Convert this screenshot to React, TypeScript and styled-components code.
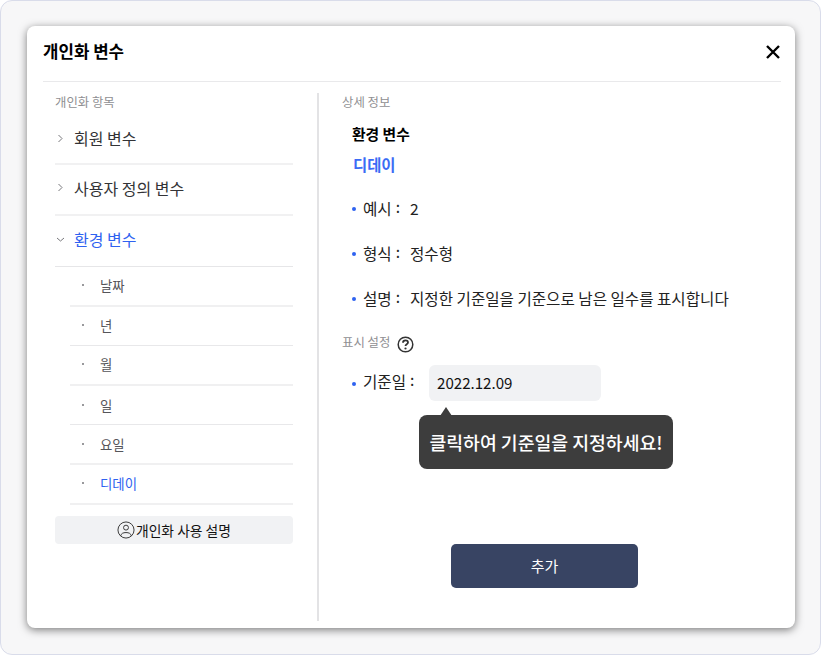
import React from "react";
import styled, { createGlobalStyle } from "styled-components";

const Global = createGlobalStyle`
  html, body { margin: 0; padding: 0; background: #fff; }
  body { font-family: "Noto Sans CJK KR", "Noto Sans", sans-serif; }
  * { box-sizing: border-box; }
`;

const Frame = styled.div`
  width: 821px; height: 655px;
  background: #f7f7f8;
  border: 1px solid #d9dcea;
  border-radius: 12px;
  padding: 25px 25px 26px 26px;
`;
const Modal = styled.div`
  width: 768px; height: 602px;
  background: #fff;
  border-radius: 8px;
  box-shadow: 0 2px 8px rgba(0,0,0,.5);
  padding: 0 14px 7px 16px;
  display: flex; flex-direction: column;
`;
const Header = styled.header`
  height: 56px;
  flex: none;
  border-bottom: 1px solid #e9e9eb;
  display: flex; align-items: center; justify-content: space-between;
`;
const Title = styled.h1`
  margin: 0; font-size: 16.8px; font-weight: 700; color: #000; line-height: 24px; position: relative; top: -3px;
`;
const Close = styled.button`
  border: 0; background: none; padding: 0; width: 16px; height: 16px; display: flex; position: relative; top: -2px;
`;
const Columns = styled.div`
  flex: 1; display: flex; padding-top: 11px; min-height: 0;
`;
const Left = styled.aside`
  width: 276px; flex: none;
  padding: 0 24px 0 12px;
  border-right: 2px solid #e3e3e5;
`;
const Right = styled.section`
  flex: 1; padding-left: 23px; position: relative; display: flex; flex-direction: column;
`;
const SectionLabel = styled.div`
  font-size: 12.4px; line-height: 18px; color: #8f8f92; height: 18px;
`;
const MainRow = styled.div<{ $active?: boolean }>`
  height: 51px; display: flex; align-items: center; gap: 9px;
  border-bottom: ${p => (p.$active ? "1px" : "2px")} solid ${p => (p.$active ? "#e6e6e8" : "#f1f1f2")};
  padding: 0 0 4px 1px;
  font-size: 16px; line-height: 22px;
  color: ${p => (p.$active ? "#2f62f0" : "#333336")};
`;
const FirstRow = styled(MainRow)`
  height: 54px; padding-top: 2px; padding-bottom: 0;
`;
const Chevron = styled.svg`
  width: 9px; height: 9px; flex: none; color: #77777b;
`;
const SubList = styled.div`
  padding-left: 15px;
`;
const SubRow = styled.div<{ $active?: boolean; $thick?: boolean }>`
  height: 39.6px; display: flex; align-items: center;
  border-bottom: ${p => (p.$thick ? "2px solid #f0f0f1" : "1px solid #e8e8ea")};
  font-size: 13.4px; line-height: 20px; padding-bottom: 1px;
  color: ${p => (p.$active ? "#2f62f0" : "#55555a")};
`;
const SubDot = styled.span`
  width: 2px; height: 2px; background: #77777b; border-radius: 50%; margin: 0 16px 0 12px; flex: none;
`;
const GuideButton = styled.button`
  width: 238px; height: 28px; margin-top: 11px;
  border: 0; border-radius: 4px; background: #f1f2f4;
  display: flex; align-items: center; justify-content: center; gap: 1px;
  font: inherit; font-size: 13.8px; color: #111; padding: 1px 0 0;
`;
const Category = styled.div`
  font-size: 14.8px; font-weight: 700; line-height: 20px; color: #000;
  margin: 13px 0 0 10px;
`;
const Name = styled.div`
  font-size: 15.4px; font-weight: 700; line-height: 22px; color: #3b6cf5;
  margin: 9px 0 0 11px;
`;
const InfoList = styled.ul`
  list-style: none; margin: 10px 0 0 0; padding: 0 0 0 10px;
  display: flex; flex-direction: column;
`;
const InfoRow = styled.li`
  height: 45px; display: flex; align-items: center;
  font-size: 15.6px; color: #222; line-height: 20px;
`;
const Bullet = styled.span`
  width: 4px; height: 4px; border-radius: 50%; background: #2f62f0; flex: none; margin: 2px 7px 0 0;
`;
const Key = styled.span`
  width: 47px; flex: none; white-space: nowrap;
`;
const Value = styled.span`
  white-space: nowrap;
`;
const Colon = styled.span`
  position: relative; top: -2px; margin-left: 4px;
`;
const SettingLabel = styled.div`
  display: flex; align-items: center; gap: 6px; margin-top: 12px;
  font-size: 12.4px; line-height: 18px; color: #8f8f92; height: 20px;
`;
const HelpIcon = styled.svg`
  width: 17px; height: 17px; flex: none; margin: 4px 0 0 1px;
`;
const DateRow = styled.div`
  display: flex; align-items: center; margin: 13px 0 0 10px; position: relative;
  font-size: 15.6px; color: #222; line-height: 20px;
`;
const DateKey = styled.span`
  width: 66px; flex: none; white-space: nowrap; position: relative; top: -2px;
`;
const DateInput = styled.div`
  width: 172px; height: 36px; border-radius: 6px; background: #f1f2f4;
  padding: 0 0 3px 8px; display: flex; align-items: center;
  font-size: 15.1px; color: #111;
`;
const Tooltip = styled.div`
  position: absolute; left: 67px; top: 50px; height: 54px; width: 254px;
  background: #3d3d3d; color: #fff; border-radius: 8px;
  display: flex; align-items: center; justify-content: center;
  font-size: 18.3px; font-weight: 500; white-space: nowrap;
  &::before {
    content: ""; position: absolute; left: 21px; top: -8px;
    border-left: 6px solid transparent; border-right: 6px solid transparent;
    border-bottom: 9px solid #3d3d3d;
  }
`;
const AddButton = styled.button`
  position: absolute; left: 132px; top: 451px; width: 187px; height: 44px;
  border: 0; border-radius: 5px; background: #384463; color: #fff;
  font: inherit; font-size: 15px; padding: 0 0 2px;
`;

const ChevronRight = () => (
  <Chevron viewBox="0 0 9 9" fill="none" stroke="currentColor" strokeWidth="1"><path d="M2.5 1 6 4.5 2.5 8" /></Chevron>
);
const ChevronDown = () => (
  <Chevron viewBox="0 0 9 9" fill="none" stroke="currentColor" strokeWidth="1"><path d="M1 3 4.5 6 8 3" /></Chevron>
);

const subs = ["날짜", "년", "월", "일", "요일", "디데이"];

export default function App() {
  return (
    <Frame>
      <Global />
      <Modal>
        <Header>
          <Title>개인화 변수</Title>
          <Close aria-label="닫기">
            <svg width="16" height="16" viewBox="0 0 16 16" fill="none" stroke="#000" strokeWidth="2.4"><path d="M2 2 14 14M14 2 2 14" /></svg>
          </Close>
        </Header>
        <Columns>
          <Left>
            <SectionLabel>개인화 항목</SectionLabel>
            <FirstRow><ChevronRight />회원 변수</FirstRow>
            <MainRow><ChevronRight />사용자 정의 변수</MainRow>
            <MainRow $active><ChevronDown />환경 변수</MainRow>
            <SubList>
              {subs.map((s, i) => (
                <SubRow key={s} $active={s === "디데이"} $thick={i % 2 === 0 || i === 5}>
                  <SubDot />{s}
                </SubRow>
              ))}
            </SubList>
            <GuideButton>
              <svg width="18" height="18" viewBox="0 0 19 19" fill="none" stroke="#333" strokeWidth="1">
                <circle cx="9.5" cy="9.5" r="8.5" />
                <circle cx="9.5" cy="7" r="2.6" />
                <path d="M3.8 15.8c.6-2.6 2.6-3.6 5.7-3.6s5.100 1 5.700 3.600" />
              </svg>
              개인화 사용 설명
            </GuideButton>
          </Left>
          <Right>
            <SectionLabel>상세 정보</SectionLabel>
            <Category>환경 변수</Category>
            <Name>디데이</Name>
            <InfoList>
              <InfoRow><Bullet /><Key>예시<Colon>:</Colon></Key><Value>2</Value></InfoRow>
              <InfoRow><Bullet /><Key>형식<Colon>:</Colon></Key><Value>정수형</Value></InfoRow>
              <InfoRow><Bullet /><Key>설명<Colon>:</Colon></Key><Value>지정한 기준일을 기준으로 남은 일수를 표시합니다</Value></InfoRow>
            </InfoList>
            <SettingLabel>
              표시 설정
              <HelpIcon viewBox="0 0 17 17" fill="none">
                <circle cx="8.500" cy="8.500" r="7.300" stroke="#333" strokeWidth="1.500" />
                <path d="M6 6.700c0-1.500 1.100-2.400 2.500-2.400s2.500.9 2.500 2.200c0 1.800-2.500 1.700-2.500 3.400" stroke="#333" strokeWidth="1.800" />
                <circle cx="8.500" cy="12.500" r="1.100" fill="#333" />
              </HelpIcon>
            </SettingLabel>
            <DateRow>
              <Bullet />
              <DateKey>기준일<Colon>:</Colon></DateKey>
              <DateInput>2022.12.09</DateInput>
              <Tooltip>클릭하여 기준일을 지정하세요!</Tooltip>
            </DateRow>
            <AddButton>추가</AddButton>
          </Right>
        </Columns>
      </Modal>
    </Frame>
  );
}
